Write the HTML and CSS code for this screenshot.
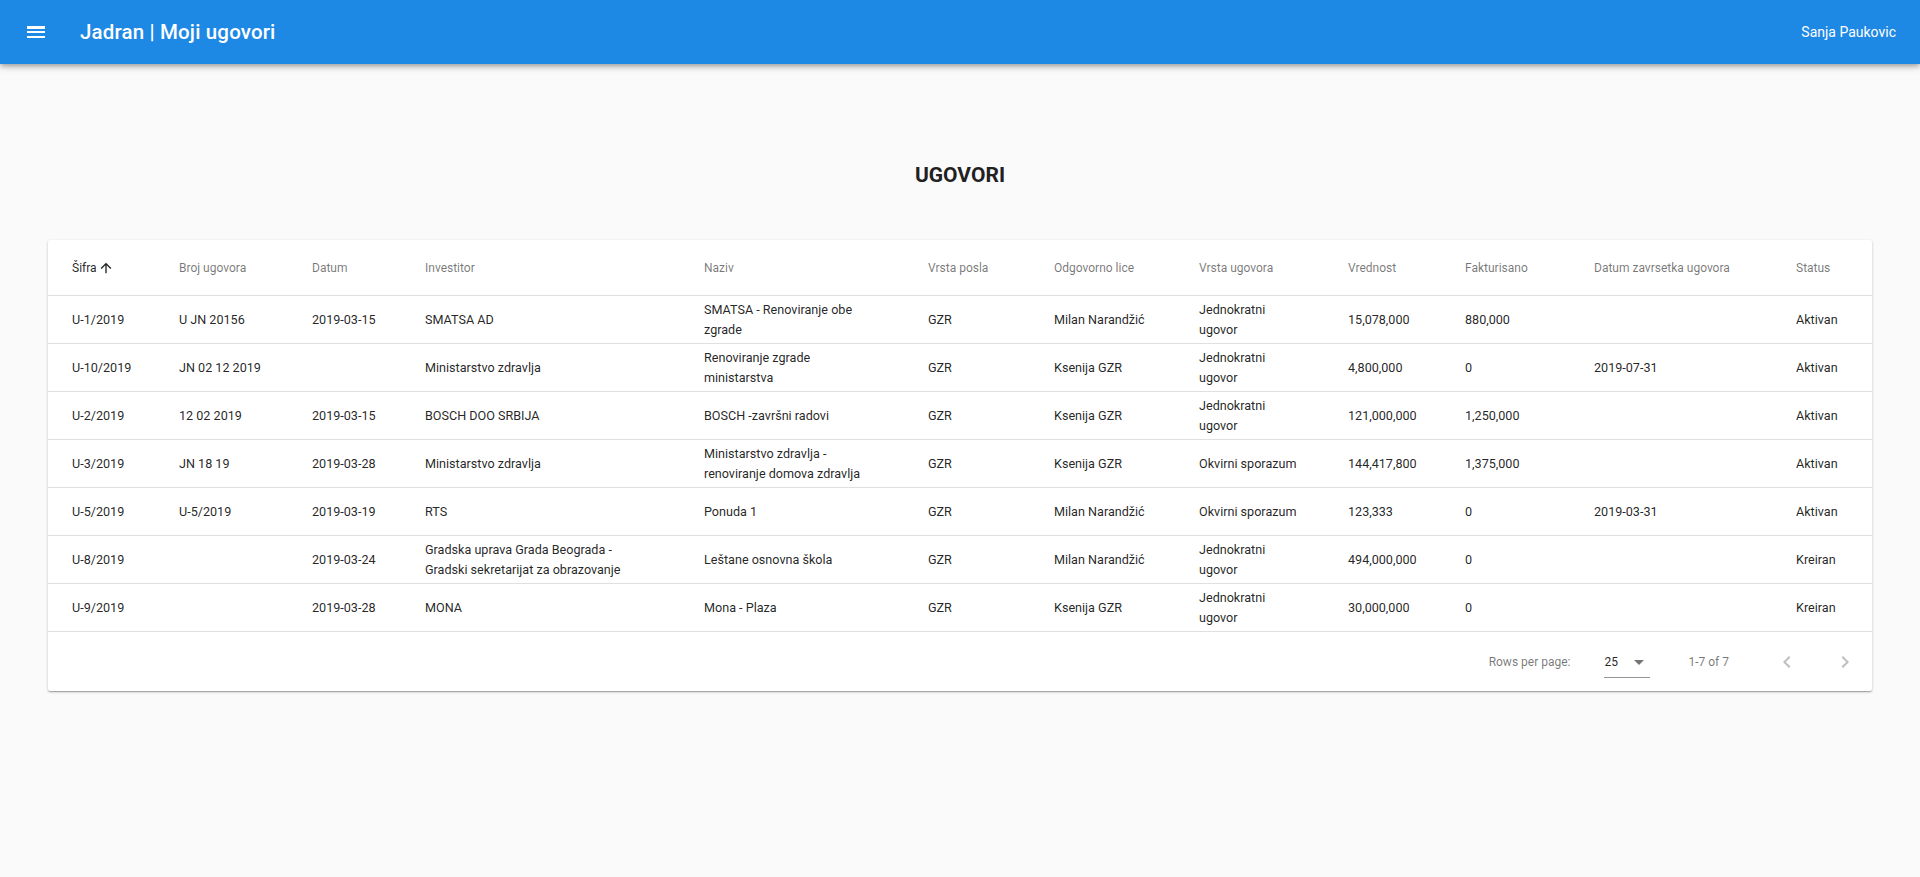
FILE: index.html
```html
<!DOCTYPE html>
<html lang="sr">
<head>
<meta charset="utf-8">
<title>Jadran | Moji ugovori</title>
<link rel="stylesheet" href="styles.css">
</head>
<body>
<header class="appbar">
  <button class="menu-btn" aria-label="menu">
    <svg viewBox="0 0 24 24" width="24" height="24"><path fill="#fff" d="M3 18h18v-2H3v2zm0-5h18v-2H3v2zm0-6v2h18V6H3z"/></svg>
  </button>
  <h1 class="app-title">Jadran | Moji ugovori</h1>
  <div class="spacer"></div>
  <span class="user">Sanja Paukovic</span>
</header>

<main class="content">
  <h2 class="page-title">UGOVORI</h2>
  <section class="paper">
    <table class="grid">
      <colgroup>
        <col class="c1"><col class="c2"><col class="c3"><col class="c4"><col class="c5"><col class="c6">
        <col class="c7"><col class="c8"><col class="c9"><col class="c10"><col class="c11"><col class="c12">
      </colgroup>
      <thead>
        <tr>
          <th class="sorted"><span class="sort-label">Šifra<svg viewBox="0 0 24 24" width="16" height="16"><path fill="currentColor" d="M4 12l1.41 1.41L11 7.83V20h2V7.83l5.58 5.59L20 12l-8-8-8 8z"/></svg></span></th>
          <th>Broj ugovora</th>
          <th>Datum</th>
          <th>Investitor</th>
          <th>Naziv</th>
          <th>Vrsta posla</th>
          <th>Odgovorno lice</th>
          <th>Vrsta ugovora</th>
          <th>Vrednost</th>
          <th>Fakturisano</th>
          <th>Datum zavrsetka ugovora</th>
          <th>Status</th>
        </tr>
      </thead>
      <tbody>
        <tr>
          <td>U-1/2019</td><td>U JN 20156</td><td>2019-03-15</td><td>SMATSA AD</td>
          <td>SMATSA - Renoviranje obe<br>zgrade</td><td>GZR</td><td>Milan Narandžić</td>
          <td>Jednokratni<br>ugovor</td><td>15,078,000</td><td>880,000</td><td></td><td>Aktivan</td>
        </tr>
        <tr>
          <td>U-10/2019</td><td>JN 02 12 2019</td><td></td><td>Ministarstvo zdravlja</td>
          <td>Renoviranje zgrade<br>ministarstva</td><td>GZR</td><td>Ksenija GZR</td>
          <td>Jednokratni<br>ugovor</td><td>4,800,000</td><td>0</td><td>2019-07-31</td><td>Aktivan</td>
        </tr>
        <tr>
          <td>U-2/2019</td><td>12 02 2019</td><td>2019-03-15</td><td>BOSCH DOO SRBIJA</td>
          <td>BOSCH -završni radovi</td><td>GZR</td><td>Ksenija GZR</td>
          <td>Jednokratni<br>ugovor</td><td>121,000,000</td><td>1,250,000</td><td></td><td>Aktivan</td>
        </tr>
        <tr>
          <td>U-3/2019</td><td>JN 18 19</td><td>2019-03-28</td><td>Ministarstvo zdravlja</td>
          <td>Ministarstvo zdravlja -<br>renoviranje domova zdravlja</td><td>GZR</td><td>Ksenija GZR</td>
          <td>Okvirni sporazum</td><td>144,417,800</td><td>1,375,000</td><td></td><td>Aktivan</td>
        </tr>
        <tr>
          <td>U-5/2019</td><td>U-5/2019</td><td>2019-03-19</td><td>RTS</td>
          <td>Ponuda 1</td><td>GZR</td><td>Milan Narandžić</td>
          <td>Okvirni sporazum</td><td>123,333</td><td>0</td><td>2019-03-31</td><td>Aktivan</td>
        </tr>
        <tr>
          <td>U-8/2019</td><td></td><td>2019-03-24</td><td>Gradska uprava Grada Beograda -<br>Gradski sekretarijat za obrazovanje</td>
          <td>Leštane osnovna škola</td><td>GZR</td><td>Milan Narandžić</td>
          <td>Jednokratni<br>ugovor</td><td>494,000,000</td><td>0</td><td></td><td>Kreiran</td>
        </tr>
        <tr>
          <td>U-9/2019</td><td></td><td>2019-03-28</td><td>MONA</td>
          <td>Mona - Plaza</td><td>GZR</td><td>Ksenija GZR</td>
          <td>Jednokratni<br>ugovor</td><td>30,000,000</td><td>0</td><td></td><td>Kreiran</td>
        </tr>
      </tbody>
    </table>
    <div class="pagination">
      <span class="caption">Rows per page:</span>
      <div class="select">
        <span class="select-value">25</span>
        <svg class="select-icon" viewBox="0 0 24 24" width="24" height="24"><path fill="currentColor" d="M7 10l5 5 5-5z"/></svg>
      </div>
      <span class="caption range">1-7 of 7</span>
      <div class="actions">
        <button class="page-btn" aria-label="Previous page" disabled>
          <svg viewBox="0 0 24 24" width="24" height="24"><path fill="currentColor" d="M15.41 7.41L14 6l-6 6 6 6 1.41-1.41L10.83 12z"/></svg>
        </button>
        <button class="page-btn" aria-label="Next page" disabled>
          <svg viewBox="0 0 24 24" width="24" height="24"><path fill="currentColor" d="M10 6L8.59 7.41 13.17 12l-4.58 4.59L10 18l6-6z"/></svg>
        </button>
      </div>
    </div>
  </section>
</main>
</body>
</html>
```

FILE: styles.css
```css
* { box-sizing: border-box; }

html, body {
  margin: 0;
  padding: 0;
  background: #fafafa;
  font-family: Roboto, "Liberation Sans", Arial, sans-serif;
  color: rgba(0, 0, 0, 0.87);
}

.appbar {
  height: 64px;
  display: flex;
  align-items: center;
  padding: 0 24px;
  background: #1e88e5;
  color: #fff;
  box-shadow: 0 2px 4px -1px rgba(0,0,0,0.2), 0 4px 5px 0 rgba(0,0,0,0.14), 0 1px 10px 0 rgba(0,0,0,0.12);
  position: relative;
  z-index: 2;
}

.menu-btn {
  width: 48px;
  height: 48px;
  margin-left: -12px;
  margin-right: 20px;
  padding: 12px;
  border: 0;
  background: transparent;
  display: flex;
  align-items: center;
  justify-content: center;
}

.app-title {
  margin: 0;
  font-size: 20.5px;
  font-weight: 500;
  letter-spacing: 0.0075em;
  line-height: 1.6;
}

.spacer { flex: 1; }

.user {
  font-size: 14px;
  font-weight: 400;
}

.content {
  padding: 99px 48px 48px;
}

.page-title {
  margin: 0 0 53px;
  text-align: center;
  font-size: 21px;
  line-height: 24px;
  font-weight: 700;
  color: #212121;
}

.paper {
  background: #fff;
  box-shadow: 0 1px 3px 0 rgba(0,0,0,0.2), 0 1px 1px 0 rgba(0,0,0,0.14), 0 2px 1px -1px rgba(0,0,0,0.12);
  border-radius: 2px;
}

.grid {
  width: 100%;
  table-layout: fixed;
  border-collapse: separate;
  border-spacing: 0;
}

.c1 { width: 107px; }
.c2 { width: 133px; }
.c3 { width: 113px; }
.c4 { width: 279px; }
.c5 { width: 224px; }
.c6 { width: 126px; }
.c7 { width: 145px; }
.c8 { width: 149px; }
.c9 { width: 117px; }
.c10 { width: 129px; }
.c11 { width: 202px; }
.c12 { width: 100px; }

.grid th,
.grid td {
  padding: 0 0 0 24px;
  text-align: left;
  vertical-align: middle;
  border-bottom: 1px solid #e0e0e0;
  white-space: nowrap;
  overflow: hidden;
  box-sizing: content-box;
}

.grid th {
  height: 55px;
  font-size: 12px;
  font-weight: 400;
  color: rgba(0, 0, 0, 0.54);
}

.grid th.sorted { color: rgba(0, 0, 0, 0.87); }

.sort-label {
  display: inline-flex;
  align-items: center;
}

.sort-label svg {
  margin-left: 1px;
}

.grid td {
  height: 47px;
  font-size: 12.6px;
  line-height: 19.5px;
  color: rgba(0, 0, 0, 0.87);
}

.pagination {
  height: 59px;
  display: flex;
  align-items: center;
  justify-content: flex-end;
  padding-right: 3px;
}

.caption {
  font-size: 12px;
  color: rgba(0, 0, 0, 0.54);
}

.select {
  position: relative;
  width: 46px;
  height: 32px;
  margin-left: 34px;
  margin-right: 38px;
  border-bottom: 1px solid rgba(0, 0, 0, 0.42);
  display: flex;
  align-items: center;
  padding-top: 1px;
}

.select-value {
  font-size: 12px;
  color: rgba(0, 0, 0, 0.87);
}

.select-icon {
  position: absolute;
  left: 23px;
  top: 4px;
  color: rgba(0, 0, 0, 0.54);
}

.actions {
  display: flex;
  gap: 10px;
  margin-left: 34px;
}

.page-btn {
  width: 48px;
  height: 48px;
  padding: 12px;
  border: 0;
  background: transparent;
  color: rgba(0, 0, 0, 0.26);
  display: flex;
  align-items: center;
  justify-content: center;
}
```
